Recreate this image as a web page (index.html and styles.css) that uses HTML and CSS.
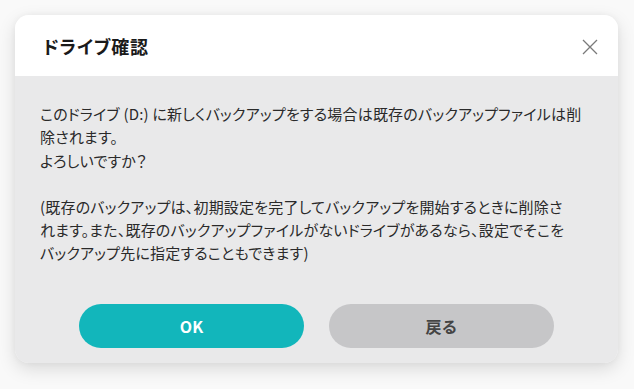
FILE: index.html
```html
<!DOCTYPE html>
<html lang="ja">
<head>
<meta charset="utf-8">
<link rel="stylesheet" href="styles.css">
</head>
<body>
<div class="dialog">
  <div class="header">
    <h1 class="title">ドライブ確認</h1>
    <button class="close" aria-label="閉じる">
      <svg width="16" height="16" viewBox="0 0 16 16"><path d="M1 1L15 15M15 1L1 15" stroke="#7a7a7a" stroke-width="1.3" fill="none"/></svg>
    </button>
  </div>
  <div class="body">
    <p class="msg">このドライブ (D:) に新しくバックアップをする場合は既存のバックアップファイルは削<br>除されます。<br>よろしいですか？</p>
    <p class="msg">(既存のバックアップは、初期設定を完了してバックアップを開始するときに削除さ<br>れます。また、既存のバックアップファイルがないドライブがあるなら、設定でそこを<br>バックアップ先に指定することもできます)</p>
    <div class="actions">
      <button class="btn btn-ok">OK</button>
      <button class="btn btn-back">戻る</button>
    </div>
  </div>
</div>
</body>
</html>
```
FILE: styles.css
```css
html, body {
  margin: 0;
  padding: 0;
}
body {
  background: #f9f9f9;
  padding: 15px 16px 26px 15px;
  font-family: "Noto Sans CJK JP", "Noto Sans", sans-serif;
}
.dialog {
  width: 603px;
  height: 348px;
  border-radius: 14px;
  overflow: hidden;
  display: flex;
  flex-direction: column;
  box-shadow: 0 6px 18px rgba(0, 0, 0, 0.13), 0 0 6px rgba(0, 0, 0, 0.04);
}
.header {
  height: 61px;
  background: #ffffff;
  display: flex;
  align-items: center;
  justify-content: space-between;
  padding: 0 20px 0 28px;
  flex: none;
}
.title {
  margin: 0;
  font-size: 18px;
  font-weight: 700;
  color: #1a1a1a;
  font-feature-settings: "palt";
  letter-spacing: 0.8px;
}
.close {
  border: 0;
  background: none;
  padding: 0;
  width: 16px;
  height: 16px;
  display: flex;
  margin-top: 2px;
}
.body {
  flex: 1;
  background: #e9e9ea;
  padding: 26px 25px 15px 25px;
  display: flex;
  flex-direction: column;
}
.msg {
  margin: 0 0 23px 0;
  font-size: 15px;
  line-height: 23.3px;
  color: #2a2a2a;
  white-space: nowrap;
  font-feature-settings: "palt";
  letter-spacing: 0.2px;
}
.actions {
  margin-top: auto;
  display: flex;
  justify-content: center;
  gap: 25px;
}
.btn {
  width: 225px;
  height: 44px;
  border: 0;
  border-radius: 22px;
  font-family: "Noto Sans CJK JP", "Noto Sans", sans-serif;
  font-size: 16px;
  font-weight: 700;
}
.btn-ok {
  background: #12b6bb;
  color: #ffffff;
}
.btn-back {
  background: #c6c6c8;
  color: #444444;
}
```
